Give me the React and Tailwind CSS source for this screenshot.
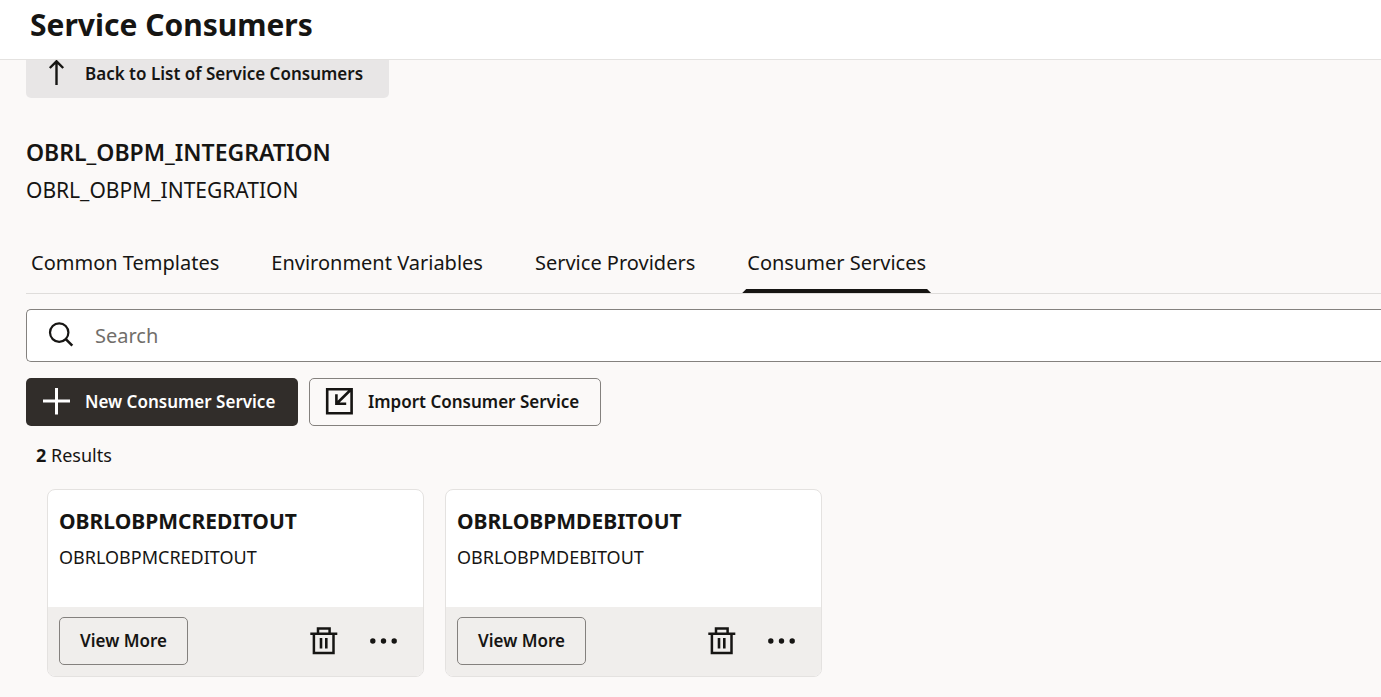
import React, { useState } from "react";

const TABS = ["Common Templates", "Environment Variables", "Service Providers", "Consumer Services"];

const SERVICES = [
  { id: "OBRLOBPMCREDITOUT", description: "OBRLOBPMCREDITOUT" },
  { id: "OBRLOBPMDEBITOUT", description: "OBRLOBPMDEBITOUT" }
];

function Icon({ children }) {
  return (
    <svg
      className="size-7 shrink-0"
      viewBox="0 0 28 28"
      fill="none"
      stroke="currentColor"
      strokeWidth="2.5"
      aria-hidden="true"
    >
      {children}
    </svg>
  );
}

function ArrowUpIcon() {
  return (
    <Icon>
      <path d="M14.5 25V1.5M7.8 8l6.7-6.7L21.2 8" strokeWidth="2.4" />
    </Icon>
  );
}

function SearchIcon() {
  return (
    <Icon>
      <circle cx="12.2" cy="10.6" r="9.2" strokeWidth="2.2" />
      <path d="M18.8 17.2l6.5 6.5" strokeWidth="2.6" />
    </Icon>
  );
}

function PlusIcon() {
  return (
    <Icon>
      <path d="M14.5 -0.5v27M1 13h27" strokeWidth="3" />
    </Icon>
  );
}

function ImportIcon() {
  return (
    <Icon>
      <path d="M2.2 1.2h24.4v24H2.2zM26 1.5L12 15.2M11.4 6.2v9.6h9.8" strokeWidth="2.6" />
    </Icon>
  );
}

function TrashIcon() {
  return (
    <Icon>
      <path d="M0.3 6.8h27M3.9 7v18.9h19.6V7M8 6.5V1.6h11.6v4.9" strokeWidth="2.5" />
      <path d="M11 11v10.5M16.3 11v10.5" strokeWidth="2.6" />
    </Icon>
  );
}

function MoreIcon() {
  return (
    <Icon>
      <g fill="currentColor" stroke="none">
        <circle cx="2.8" cy="14" r="2.7" />
        <circle cx="13.5" cy="14" r="2.7" />
        <circle cx="24.2" cy="14" r="2.7" />
      </g>
    </Icon>
  );
}

function ServiceCard({ service }) {
  return (
    <article className="w-[377px] overflow-hidden rounded-lg border border-[#e4e2e0] bg-white">
      <div className="h-[117px] px-[11px] pt-[15px]">
        <h3 className="text-[21px] leading-8 font-bold">{service.id}</h3>
        <p className="mt-1 text-[18px] leading-8">{service.description}</p>
      </div>
      <div className="flex items-center bg-[#f0eeec] pt-[10px] pr-[25px] pb-[11px] pl-[11px]">
        <button type="button" className="h-12 w-[129px] rounded-[5px] border border-[#84817e] text-[17px] font-semibold">
          View More
        </button>
        <div className="ml-auto flex gap-8">
          <button type="button" aria-label={`Delete ${service.id}`}>
            <TrashIcon />
          </button>
          <button type="button" aria-label={`More actions for ${service.id}`}>
            <MoreIcon />
          </button>
        </div>
      </div>
    </article>
  );
}

export default function App() {
  const [activeTab, setActiveTab] = useState("Consumer Services");

  return (
    <div className="min-h-screen overflow-x-hidden bg-[#fbf9f8] font-['Noto_Sans','Open_Sans',sans-serif] text-[#161513]">
      <header className="flex h-[60px] items-start border-b border-[#e4e2e0] bg-white px-[30px] pt-1">
        <h1 className="text-[30px] leading-[42px] font-bold">Service Consumers</h1>
      </header>

      <main className="pl-[26px]">
        {/* Back button, partly scrolled under the header */}
        <div className="flex h-[38px] items-end overflow-hidden">
          <button
            type="button"
            className="flex h-12 w-[363px] shrink-0 items-center gap-[15px] rounded-[5px] bg-[#e8e6e6] px-4 text-[17px] font-semibold whitespace-nowrap"
          >
            <ArrowUpIcon />
            Back to List of Service Consumers
          </button>
        </div>

        <h2 className="mt-9 text-[23px] leading-9 font-semibold">OBRL_OBPM_INTEGRATION</h2>
        <p className="mt-1 text-[21px] leading-8">OBRL_OBPM_INTEGRATION</p>

        <div role="tablist" className="mt-6 flex gap-[42px] border-b border-[#dfdddb]">
          {TABS.map(tab => (
            <button
              key={tab}
              type="button"
              role="tab"
              aria-selected={tab === activeTab}
              onClick={() => setActiveTab(tab)}
              className="flex flex-col whitespace-nowrap"
            >
              <span className="px-[5px] pt-[17px] pb-[10px] text-[20px] leading-8">{tab}</span>
              {tab === activeTab && (
                <span className="h-1 w-full bg-[#161513] [clip-path:polygon(4px_0,calc(100%-4px)_0,100%_100%,0_100%)]" />
              )}
            </button>
          ))}
        </div>

        <label className="mt-[15px] flex h-[53px] items-center gap-5 rounded-l-[5px] border border-r-0 border-[#84817e] bg-white pl-5">
          <SearchIcon />
          <input
            type="search"
            aria-label="Search"
            placeholder="Search"
            className="min-w-0 flex-1 text-[20px] outline-none placeholder:text-[#716e6a]"
          />
        </label>

        <div className="mt-4 flex gap-[11px]">
          <button
            type="button"
            className="flex h-12 w-[272px] items-center gap-[15px] rounded-[5px] bg-[#312d2a] px-4 text-[17px] font-semibold whitespace-nowrap text-white"
          >
            <PlusIcon />
            New Consumer Service
          </button>
          <button
            type="button"
            className="flex h-12 w-[292px] items-center gap-[15px] rounded-[5px] border border-[#84817e] px-[15px] text-[17px] font-semibold whitespace-nowrap"
          >
            <ImportIcon />
            Import Consumer Service
          </button>
        </div>

        <p className="mt-[13px] pl-[10px] text-[18px] leading-8">
          <strong>{SERVICES.length}</strong> Results
        </p>

        <section className="mt-[18px] flex flex-wrap gap-[21px] pb-5 pl-[21px]">
          {SERVICES.map(service => (
            <ServiceCard key={service.id} service={service} />
          ))}
        </section>
      </main>
    </div>
  );
}
